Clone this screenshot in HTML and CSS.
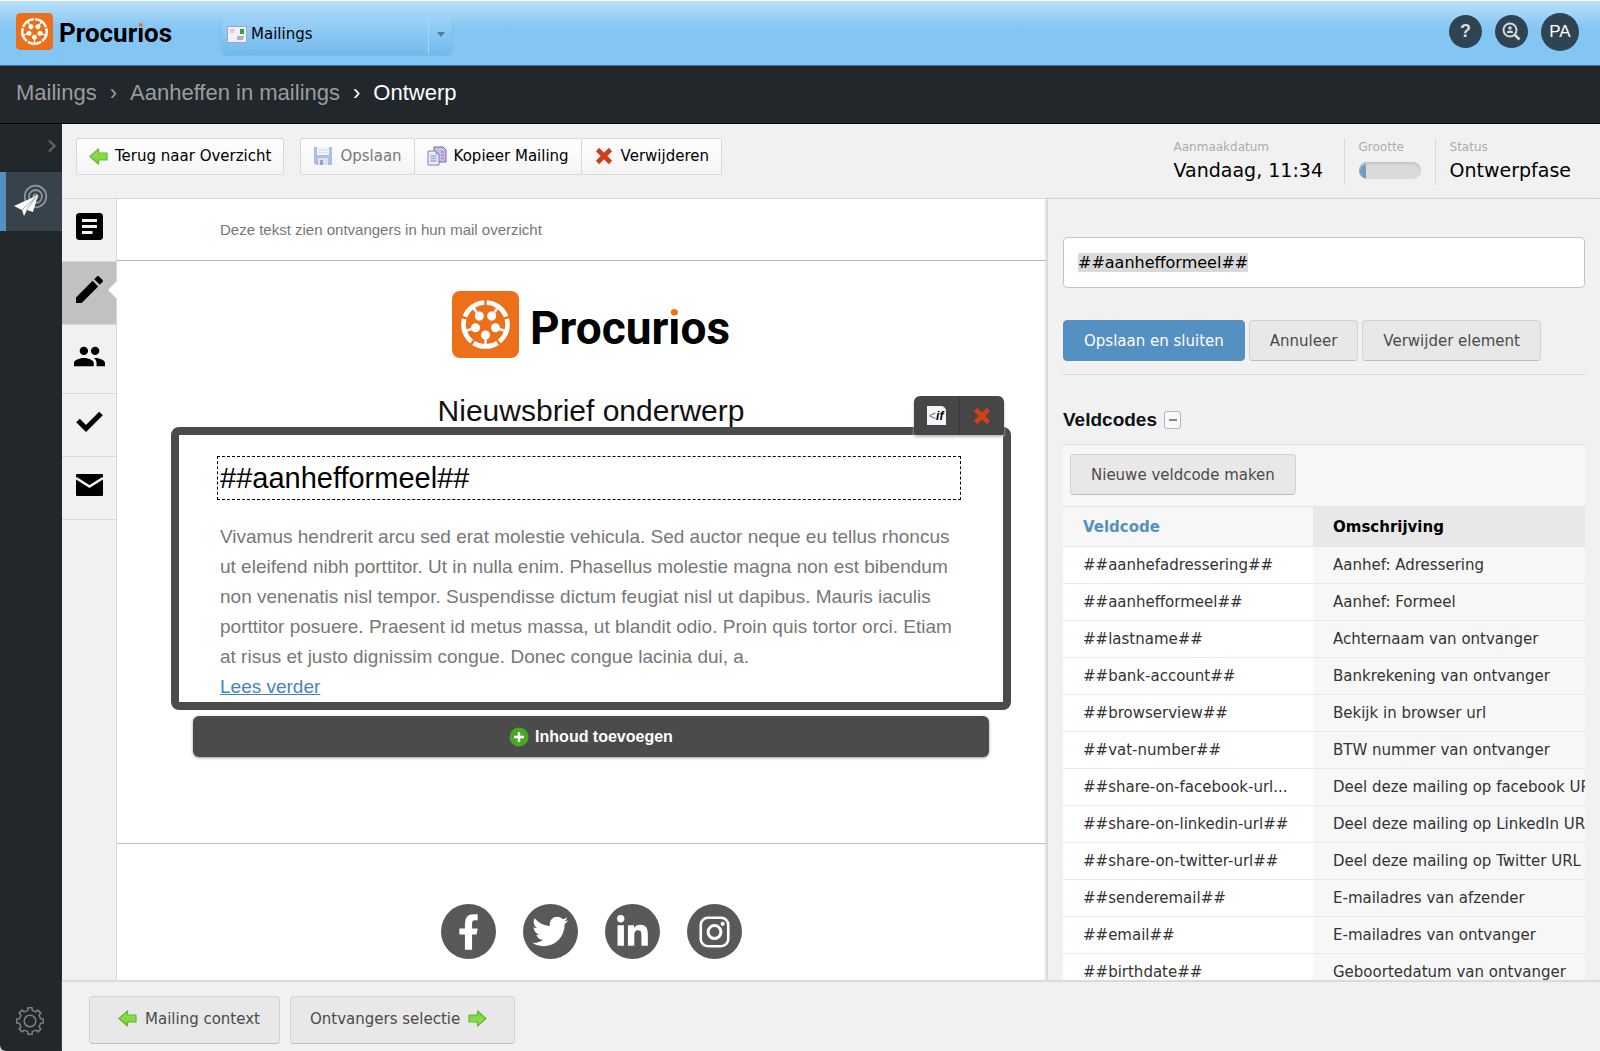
FILE: index.html
```html
<!DOCTYPE html>
<html lang="nl">
<head>
<meta charset="utf-8">
<meta name="viewport" content="width=device-width, initial-scale=1">
<title>Ontwerp - Procurios</title>
<link rel="stylesheet" href="styles.css">
</head>
<body>
<svg class="defs" aria-hidden="true">
  <defs>
    <linearGradient id="green" x1="0" y1="0" x2="0" y2="1"><stop offset="0" stop-color="#9be05a"/><stop offset="1" stop-color="#76d033"/></linearGradient>
    <g id="person"><path d="M-12 18.500A22 22 0 0 0 12 18.500" fill="none" stroke="#fff" stroke-width="4.600"/><path d="M0 11V21" stroke="#fff" stroke-width="2.400"/><circle cy="10.500" r="4.500" fill="#fff"/></g>
    <symbol id="mark" viewBox="0 0 67 67"><rect width="67" height="67" rx="8" fill="#ec7019"/><g transform="translate(33.500 33.500)"><use href="#person"/><use href="#person" transform="rotate(72)"/><use href="#person" transform="rotate(144)"/><use href="#person" transform="rotate(216)"/><use href="#person" transform="rotate(288)"/></g></symbol>
    <symbol id="arrow" viewBox="0 0 19 17"><path d="M1 8.500L9.500 1V5H18V12H9.500V16Z" fill="url(#green)" stroke="#5fb82c" stroke-width="1.200" stroke-linejoin="round"/></symbol>
    <symbol id="cross" viewBox="0 0 18 18"><path d="M2.500 2.500L15.500 15.500M15.500 2.500L2.500 15.500" stroke="#cf3f1a" stroke-width="4.600"/></symbol>
  </defs>
</svg>

<header class="topbar">
  <a class="brand" href="#" aria-label="Procurios"><svg class="brand-mark"><use href="#mark"/></svg><span class="wordmark">Procur<span class="dot-i">i</span>os</span></a>
  <div class="module">
    <svg class="module-icon" viewBox="0 0 20 17" aria-hidden="true"><rect x=".5" y=".5" width="19" height="16" fill="#f1eff9" stroke="#a5a0c8"/><path d="M3 4h5M3 6h4" stroke="#c9a0b8"/><rect x="13" y="3" width="4" height="5" fill="#37a52c"/><path d="M10 11h7M10 13h6" stroke="#9c98b8" stroke-width="1.500"/></svg>
    <select class="module-select" aria-label="Module"><option>Mailings</option></select>
    <span class="module-toggle" aria-hidden="true"></span>
  </div>
  <nav class="user-tools" aria-label="Account">
    <button class="round" aria-label="Help">?</button>
    <button class="round" aria-label="Zoeken"><svg width="19" height="19" viewBox="0 0 19 19"><circle cx="8" cy="8" r="6.500" fill="none" stroke="#d5dbdf" stroke-width="2"/><path d="M13 13L17.500 17.500" stroke="#d5dbdf" stroke-width="2.500"/><circle cx="8" cy="6" r="1.800" fill="#d5dbdf"/><path d="M5 11V9.500Q8 7.500 11 9.500V11Z" fill="#d5dbdf"/></svg></button>
    <button class="round round-user">PA</button>
  </nav>
</header>

<nav class="crumbs" aria-label="Kruimelpad"><a href="#">Mailings</a><span>›</span><a href="#">Aanheffen in mailings</a><span class="now">›</span><span class="now">Ontwerp</span></nav>

<div class="shell">
  <nav class="sidebar" aria-label="Hoofdmenu">
    <button class="expand" aria-label="Uitklappen"><svg width="10" height="14" viewBox="0 0 10 14"><path d="M2 1.500L7.500 7L2 12.500" fill="none" stroke="#5d6468" stroke-width="2.400"/></svg></button>
    <a class="side-active" href="#" aria-label="Mailings"><svg width="34" height="34" viewBox="0 0 34 34"><g fill="none" stroke="#8d969c" stroke-width="1.800"><circle cx="21.500" cy="12.500" r="10.800"/><circle cx="21.500" cy="12.500" r="6.500"/></g><circle cx="21.500" cy="12.500" r="3" fill="#8d969c"/><path d="M0 22L24 11L19 28L13 26L10 32L8 26Z" fill="#fff"/><path d="M8 26L22 13L12 26.500" fill="none" stroke="#8b959c" stroke-width=".8"/></svg></a>
    <a class="settings" href="#" aria-label="Instellingen"><svg width="28" height="28" viewBox="-14 -14 28 28" fill="none" stroke="#7b8082" stroke-width="1.500" stroke-linejoin="round"><path d="M-2.300-10.600L-2.100-13.300H2.100L2.300-10.600L5.900-9.100L7.900-10.900L10.900-7.900L9.100-5.900L10.600-2.300L13.300-2.100V2.100L10.600 2.300L9.100 5.900L10.900 7.900L7.900 10.900L5.900 9.100L2.300 10.600L2.100 13.300H-2.100L-2.300 10.600L-5.900 9.100L-7.900 10.900L-10.900 7.900L-9.100 5.900L-10.600 2.300L-13.300 2.100V-2.100L-10.600-2.300L-9.100-5.900L-10.900-7.900L-7.900-10.900L-5.900-9.100Z"/><circle r="5.800"/></svg></a>
  </nav>

  <main class="workspace">
    <div class="toolbar">
      <button class="tool"><svg class="arrow"><use href="#arrow"/></svg>Terug naar Overzicht</button>
      <div class="tool-group">
        <button class="tool" disabled><svg width="20" height="20" viewBox="0 0 20 20"><path d="M1 1H19V19H3L1 17Z" fill="#a9bfe3"/><path d="M4 1H16V9H4Z" fill="#f4f4f2"/><path d="M5.500 4H14.500M5.500 6.500H14.500" stroke="#d5d8dc"/><path d="M5 12H15V19H5Z" fill="#dfe3e8"/><path d="M7 14H10V19H7Z" fill="#8fa7cf"/></svg>Opslaan</button>
        <button class="tool"><svg width="20" height="20" viewBox="0 0 20 20"><path d="M7 1H16L19 4V16H7Z" fill="#c9bfe6" stroke="#7b64ab"/><path d="M1 5H9L12 8V19H1Z" fill="#e9eefa" stroke="#7686bd"/><path d="M9 5V8H12" fill="none" stroke="#7686bd"/><path d="M3.500 10H9.500M3.500 12.500H9.500M3.500 15H9.500" stroke="#98a8d3" stroke-width="1.300"/><path d="M14 6H17M14 9H17M14 12H17" stroke="#8b78bd"/></svg>Kopieer Mailing</button>
        <button class="tool"><svg width="20" height="18"><use href="#cross"/></svg>Verwijderen</button>
      </div>
      <dl class="facts">
        <div><dt>Aanmaakdatum</dt><dd>Vandaag, 11:34</dd></div>
        <div><dt>Grootte</dt><dd><span class="meter" role="img" aria-label="Grootte van de mailing"></span></dd></div>
        <div><dt>Status</dt><dd>Ontwerpfase</dd></div>
      </dl>
    </div>

    <div class="panes">
      <nav class="rail" aria-label="Stappen">
        <a href="#" aria-label="Context"><svg viewBox="3 3 18 18" width="27" height="27"><path d="M19 3H5c-1.100 0-2 .9-2 2v14c0 1.100.9 2 2 2h14c1.100 0 2-.9 2-2V5c0-1.100-.9-2-2-2zm-5 14H7v-2h7v2zm3-4H7v-2h10v2zm0-4H7V7h10v2z"/></svg></a>
        <a href="#" class="current" aria-label="Ontwerp"><svg viewBox="3 3 18 18" width="27" height="27"><path d="M3 17.250V21h3.750L17.810 9.940l-3.750-3.750L3 17.250zM20.710 7.040c.39-.39.39-1.020 0-1.410l-2.340-2.340c-.39-.39-1.020-.39-1.410 0l-1.830 1.830 3.750 3.750 1.830-1.830z"/></svg></a>
        <a href="#" class="tall" aria-label="Ontvangers"><svg viewBox="1 5 22 14" width="31" height="21"><path d="M16 11c1.660 0 2.990-1.340 2.990-3S17.660 5 16 5c-1.660 0-3 1.340-3 3s1.340 3 3 3zm-8 0c1.660 0 2.990-1.340 2.990-3S9.660 5 8 5C6.340 5 5 6.340 5 8s1.340 3 3 3zm0 2c-2.330 0-7 1.170-7 3.500V19h14v-2.500c0-2.330-4.670-3.500-7-3.500zm8 0c-.29 0-.62.020-.97.050 1.160.84 1.970 1.970 1.970 3.450V19h6v-2.500c0-2.330-4.670-3.500-7-3.500z"/></svg></a>
        <a href="#" aria-label="Controle"><svg viewBox="0 0 27 21" width="27" height="21"><path d="M2 9.500L10 17.500L25 2.500" fill="none" stroke="#000" stroke-width="5"/></svg></a>
        <a href="#" aria-label="Verzenden"><svg viewBox="0 0 27 22" width="27" height="22"><rect width="27" height="22" rx="1"/><path d="M0 4L13.500 12.500L27 4" fill="none" stroke="#f1f1f1" stroke-width="2.600"/></svg></a>
      </nav>

      <section class="preview" aria-label="Voorbeeld">
        <p class="preheader">Deze tekst zien ontvangers in hun mail overzicht</p>
        <div class="mail">
          <div class="mail-logo"><svg class="mail-mark"><use href="#mark"/></svg><span class="wordmark wordmark-big">Procur<span class="dot-i">i</span>os</span></div>
          <h1 class="subject">Nieuwsbrief onderwerp</h1>
          <article class="block">
            <div class="block-tools">
              <button aria-label="Voorwaarde"><span class="if-icon">&lt;<b>if</b></span></button>
              <button aria-label="Blok verwijderen"><svg width="22" height="18"><use href="#cross"/></svg></button>
            </div>
            <h2 class="salutation">##aanhefformeel##</h2>
            <p class="copy">Vivamus hendrerit arcu sed erat molestie vehicula. Sed auctor neque eu tellus rhoncus<br>ut eleifend nibh porttitor. Ut in nulla enim. Phasellus molestie magna non est bibendum<br>non venenatis nisl tempor. Suspendisse dictum feugiat nisl ut dapibus. Mauris iaculis<br>porttitor posuere. Praesent id metus massa, ut blandit odio. Proin quis tortor orci. Etiam<br>at risus et justo dignissim congue. Donec congue lacinia dui, a.<br><a href="#">Lees verder</a></p>
          </article>
          <button class="add"><svg width="20" height="20" viewBox="0 0 20 20"><circle cx="10" cy="10" r="9.500" fill="#48a823"/><path d="M10 5V15M5 10H15" stroke="#fff" stroke-width="2.400"/></svg>Inhoud toevoegen</button>
        </div>
        <div class="social">
          <a href="#" aria-label="Facebook"><svg viewBox="0 0 54 54"><path d="M23.500 45V30H18V24H23.500V19Q23.500 10 32 10H36V16H33Q30.500 16 30.500 19V24H36L35 30H30.500V45Z"/></svg></a>
          <a href="#" aria-label="Twitter"><svg viewBox="-130 -134 780 780"><path d="M459.370 151.716c.325 4.548.325 9.097.325 13.645 0 138.720-105.583 298.558-298.558 298.558-59.452 0-114.680-17.219-161.137-47.106 8.447.974 16.568 1.299 25.340 1.299 49.055 0 94.213-16.568 130.274-44.832-46.132-.975-84.792-31.188-98.112-72.772 6.498.974 12.995 1.624 19.818 1.624 9.421 0 18.843-1.300 27.614-3.573-48.081-9.747-84.143-51.980-84.143-102.985v-1.299c13.969 7.797 30.214 12.670 47.431 13.319-28.264-18.843-46.781-51.005-46.781-87.391 0-19.492 5.197-37.360 14.294-52.954 51.655 63.675 129.300 105.258 216.365 109.807-1.624-7.797-2.599-15.918-2.599-24.040 0-57.828 46.782-104.934 104.934-104.934 30.213 0 57.502 12.670 76.670 33.137 23.715-4.548 46.456-13.320 66.599-25.340-7.798 24.366-24.366 44.833-46.132 57.827 21.117-2.273 41.584-8.122 60.426-16.243-14.292 20.791-32.161 39.308-52.628 54.253z"/></svg></a>
          <a href="#" aria-label="LinkedIn"><svg viewBox="-175 -160 800 800"><path d="M100.280 448H7.400V148.900h92.880zM53.790 108.100C24.090 108.100 0 83.500 0 53.800a53.790 53.790 0 0 1 107.580 0c0 29.700-24.100 54.300-53.790 54.300zM447.900 448h-92.680V302.400c0-34.700-.7-79.200-48.290-79.200-48.290 0-55.690 37.700-55.690 76.700V448h-92.780V148.900h89.080v40.800h1.300c12.400-23.500 42.690-48.300 87.880-48.300 94 0 111.280 61.900 111.280 142.300V448z"/></svg></a>
          <a href="#" aria-label="Instagram"><svg viewBox="0 0 54 54"><rect x="13.500" y="13.500" width="27" height="28" rx="7" fill="none" stroke="#fff" stroke-width="2.600"/><circle cx="27" cy="27.500" r="6.300" fill="none" stroke="#fff" stroke-width="3"/><circle cx="35" cy="19.500" r="2"/></svg></a>
        </div>
      </section>

      <aside class="editor">
        <input class="field" id="tekst" type="text" value="##aanhefformeel##" aria-label="Tekst">
        <div class="actions">
          <button class="btn btn-primary">Opslaan en sluiten</button>
          <button class="btn">Annuleer</button>
          <button class="btn">Verwijder element</button>
        </div>
        <h2 class="editor-title">Veldcodes <button class="collapse" aria-label="Inklappen"></button></h2>
        <div class="new-code"><button class="btn">Nieuwe veldcode maken</button></div>
        <table class="codes">
          <thead><tr><th><a href="#">Veldcode</a></th><th>Omschrijving</th></tr></thead>
          <tbody>
            <tr><td>##aanhefadressering##</td><td>Aanhef: Adressering</td></tr>
            <tr><td>##aanhefformeel##</td><td>Aanhef: Formeel</td></tr>
            <tr><td>##lastname##</td><td>Achternaam van ontvanger</td></tr>
            <tr><td>##bank-account##</td><td>Bankrekening van ontvanger</td></tr>
            <tr><td>##browserview##</td><td>Bekijk in browser url</td></tr>
            <tr><td>##vat-number##</td><td>BTW nummer van ontvanger</td></tr>
            <tr><td>##share-on-facebook-url...</td><td>Deel deze mailing op facebook URL</td></tr>
            <tr><td>##share-on-linkedin-url##</td><td>Deel deze mailing op LinkedIn URL</td></tr>
            <tr><td>##share-on-twitter-url##</td><td>Deel deze mailing op Twitter URL</td></tr>
            <tr><td>##senderemail##</td><td>E-mailadres van afzender</td></tr>
            <tr><td>##email##</td><td>E-mailadres van ontvanger</td></tr>
            <tr><td>##birthdate##</td><td>Geboortedatum van ontvanger</td></tr>
          </tbody>
        </table>
      </aside>
    </div>

    <footer class="steps">
      <button class="btn step"><svg class="arrow"><use href="#arrow"/></svg>Mailing context</button>
      <button class="btn step">Ontvangers selectie<svg class="arrow arrow-next"><use href="#arrow"/></svg></button>
    </footer>
  </main>
</div>
<script src="app.js"></script>
</body>
</html>
```
FILE: styles.css
```css
:root {
  --ui: "DejaVu Sans", Verdana, sans-serif;
  --text: "Liberation Sans", Arial, sans-serif;
  --blue: #5490c1;
  --dark: #22272b;
  --frame: #4b4b4b;
  --pane: #f1f1f1;
  --line: #d8d8d8;
}

* { box-sizing: border-box; }

body {
  margin: 0;
  height: 100vh;
  display: flex;
  flex-direction: column;
  overflow: hidden;
  background: #d5d5d5;
  font-family: var(--ui);
  font-size: 15px;
  color: #000;
}

button, select, input { font: inherit; color: inherit; margin: 0; }
button { cursor: pointer; }
p, h1, h2, dl, dd { margin: 0; }
svg { flex: none; }
.defs { position: absolute; width: 0; height: 0; }

/* Top bar */
.topbar {
  flex: none;
  height: 66px;
  display: flex;
  align-items: center;
  padding: 0 21px 3px 16px;
  border-top: 1px solid #fff;
  border-bottom: 1px solid #3a7096;
  background: linear-gradient(#b9e0fa, #83c5f3 28px);
}
.brand { display: flex; align-items: center; gap: 6px; width: 205px; text-decoration: none; color: #000; }
.brand-mark { width: 37px; height: 37px; }
.wordmark { padding-top: 2px; font-family: Roboto, sans-serif; font-weight: 700; font-size: 26px; line-height: 1; }
.dot-i {
  background: linear-gradient(#ec7019 34%, #000 34%);
  background-clip: text;
  -webkit-background-clip: text;
  color: transparent;
}
.module {
  display: flex;
  align-items: center;
  width: 231px;
  height: 39px;
  margin-top: 6px;
  border-radius: 6px;
  background: linear-gradient(#9fd3f7, #72baee);
  box-shadow: 0 1px 2px #6aaee0;
}
.module-icon { width: 20px; height: 17px; margin-left: 6px; }
.module-select { flex: 1; height: 39px; padding: 0 4px 1px; border: 0; background: none; appearance: none; }
.module-toggle {
  width: 24px;
  height: 39px;
  display: grid;
  place-items: center;
  border-left: 1px solid #a5d5f7;
}
.module-toggle::before { content: ""; border: 4px solid transparent; border-top: 5px solid #4b7ba0; border-bottom: 0; }
.user-tools { display: flex; align-items: center; gap: 13px; margin-left: auto; }
.round {
  width: 33px;
  height: 33px;
  display: grid;
  place-items: center;
  padding: 0;
  border: 0;
  border-radius: 50%;
  background: #2f4453;
  color: #d5dbdf;
  font: 700 18px var(--text);
}
.round-user { width: 38px; height: 38px; color: #fff; font-size: 17px; font-weight: 400; }

.crumbs {
  flex: none;
  height: 58px;
  display: flex;
  align-items: center;
  gap: 13px;
  padding: 0 16px 4px;
  background: var(--dark);
  border-bottom: 1px solid #000;
  font: 22px var(--text);
  color: #9a9d9f;
}
.crumbs a { color: inherit; text-decoration: none; }
.crumbs .now { color: #fff; }

/* Shell */
.shell { flex: 1; min-height: 0; display: flex; }
.sidebar {
  flex: none;
  width: 62px;
  display: flex;
  flex-direction: column;
  background: var(--dark);
  border-bottom-left-radius: 6px;
}
.expand { height: 48px; display: flex; align-items: center; justify-content: flex-end; padding: 0 5px 4px; border: 0; background: none; }
.side-active {
  height: 59px;
  display: grid;
  place-items: center;
  padding: 0 6px 2px 0;
  border-left: 6px solid var(--blue);
  background: #37424a;
}
.settings { margin-top: auto; padding: 0 16px 12px; }
.workspace { flex: 1; min-width: 0; display: flex; flex-direction: column; background: var(--pane); }

/* Toolbar */
.toolbar {
  flex: none;
  height: 75px;
  display: flex;
  align-items: flex-start;
  gap: 16px;
  padding: 14px 29px 0 14px;
  border-bottom: 1px solid var(--line);
}
.tool-group { display: flex; }
.tool {
  height: 37px;
  display: flex;
  align-items: center;
  gap: 7px;
  padding: 0 12px 1px;
  border: 1px solid var(--line);
  border-radius: 2px;
  background: linear-gradient(#fff, #f4f4f4);
  white-space: nowrap;
}
.tool + .tool { border-left: 0; }
.tool:disabled { color: #777; }
.arrow { width: 19px; height: 17px; }
.arrow-next { transform: rotate(180deg); }
.facts { display: flex; margin-left: auto; }
.facts div { height: 47px; padding: 2px 14px 0; border-left: 1px solid var(--line); white-space: nowrap; }
.facts div:first-child { min-width: 184px; border: 0; }
.facts div:last-child { padding-right: 0; }
.facts dt { font-size: 12px; line-height: 14px; color: #adadad; }
.facts dd { font-size: 19px; line-height: 24px; margin-top: 4px; }
.meter {
  display: block;
  width: 62px;
  height: 17px;
  margin-top: 8px;
  border-radius: 9px;
  background: linear-gradient(90deg, #719cc2 7px, #dadada 7px);
  box-shadow: inset 0 2px 2px #c4c4c4;
}

/* Panes */
.panes { flex: 1; min-height: 0; display: grid; grid-template-columns: 55px minmax(0, 1fr) 553px; }
.rail { border-right: 1px solid var(--line); }
.rail a {
  position: relative;
  height: 63px;
  display: grid;
  place-items: center;
  padding-bottom: 7px;
  border-bottom: 1px solid var(--line);
}
.rail .tall { height: 69px; padding-bottom: 6px; }
.rail .current { background: #c1c1c1; }
.rail .current::after {
  content: "";
  position: absolute;
  right: -1px;
  top: 19px;
  border: 9px solid transparent;
  border-left: 0;
  border-right-color: #fff;
}

.preview { overflow: hidden; background: #fff; font-family: var(--text); }
.preheader { height: 62px; padding: 0 103px; border-bottom: 1px solid #b5b5b5; font-size: 15px; line-height: 62px; color: #777; }
.mail { height: 583px; padding: 30px 36px 0 54px; border-bottom: 1px solid #c2c2c2; }
.mail-logo { display: flex; align-items: center; justify-content: center; gap: 11px; }
.mail-mark { width: 67px; height: 67px; }
.wordmark-big { padding-top: 6px; font-size: 46px; }
.subject { margin-top: 36px; font-size: 30px; font-weight: 400; line-height: 34px; text-align: center; color: #111; }
.block {
  position: relative;
  max-width: 840px;
  margin: -1px auto 0;
  padding: 21px 42px 0 38px;
  border: 8px solid var(--frame);
  border-radius: 8px;
}
.block-tools {
  position: absolute;
  right: -1px;
  top: -39px;
  display: flex;
  width: 90px;
  height: 39px;
  border-radius: 6px 6px 2px 2px;
  background: #464646;
  box-shadow: 0 2px 3px #bbb;
}
.block-tools button { flex: 1; display: grid; place-items: center; padding: 0; border: 0; background: none; }
.block-tools button + button { border-left: 1px solid #383838; }
.if-icon { width: 19px; height: 19px; border-top-right-radius: 5px; background: #f3f6fb; font: 12px/20px var(--text); color: #777; white-space: nowrap; }
.if-icon b { color: #000; font-style: italic; }
.salutation { height: 44px; padding: 0 2px; border: 1px dashed #000; font-size: 29px; font-weight: 400; line-height: 42px; }
.copy { padding: 22px 3px 0; font-size: 19px; line-height: 30px; color: #777; white-space: nowrap; }
.copy a { color: #4486bb; }
.add {
  width: calc(100% - 44px);
  max-width: 796px;
  height: 41px;
  display: flex;
  align-items: center;
  justify-content: center;
  gap: 6px;
  margin: 6px auto 0;
  padding: 0;
  border: 0;
  border-radius: 6px;
  background: var(--frame);
  box-shadow: 0 1px 3px #999;
  color: #fff;
  font-size: 16px;
  font-weight: 700;
  font-family: var(--text);
}
.social { display: flex; justify-content: center; gap: 27px; padding: 60px 0 0 18px; }
.social a { width: 55px; height: 55px; border-radius: 50%; background: #595959; }
.social svg { display: block; width: 55px; height: 55px; fill: #fff; }

/* Editor */
.editor { z-index: 1; overflow: hidden; padding: 38px 15px 0 15px; border-left: 1px solid var(--line); background: var(--pane); box-shadow: -1px 0 3px #ccc; }
.field {
  display: block;
  width: 100%;
  height: 51px;
  padding: 0 14px;
  border: 1px solid #c4c4c4;
  border-radius: 4px;
  outline: 0;
  background: #fff;
  font-size: 16px;
}
.field::selection { background: #d9d9d9; color: #000; }
.actions { display: flex; gap: 4px; padding: 32px 0 13px; border-bottom: 1px solid var(--line); }
.btn {
  height: 41px;
  display: flex;
  align-items: center;
  justify-content: center;
  padding: 0 20px;
  border: 1px solid #d3d3d3;
  border-bottom-color: #bebebe;
  border-radius: 4px;
  background: #e8e8e8;
  color: #4b4b4b;
  white-space: nowrap;
}
.btn-primary { border-color: var(--blue); background: var(--blue); color: #fff; }
.editor-title { display: flex; align-items: center; gap: 7px; height: 69px; padding-top: 20px; font: 700 19px var(--text); color: #0d1117; }
.collapse { width: 17px; height: 18px; display: grid; place-items: center; padding: 0; border: 1px solid #b5b5b5; border-radius: 3px; background: #fafafa; }
.collapse::before { content: ""; width: 8px; height: 2px; background: #888; }
.new-code { height: 63px; padding: 9px 7px; border-top: 1px solid #dedede; border-bottom: 1px solid #e4e4e4; background: #f7f7f7; }
.codes { width: 100%; table-layout: fixed; border-collapse: separate; border-spacing: 0; }
.codes th, .codes td { height: 37px; padding: 0 0 0 20px; overflow: hidden; border-bottom: 1px solid #e9e9e9; text-align: left; white-space: nowrap; }
.codes th { height: 40px; background: #e8e8e8; }
.codes th:first-child { width: 250px; background: #f7f7f7; }
.codes th a { color: var(--blue); text-decoration: none; }
.codes td { background: #f7f7f7; color: #333; }
.codes td:first-child { background: #fff; }

.steps { flex: none; height: 70px; display: flex; gap: 10px; padding: 14px 27px 0; border-top: 1px solid var(--line); box-shadow: 0 -1px 1px #ddd; z-index: 2; background: var(--pane); }
.step { height: 48px; gap: 8px; padding: 0 19px 3px 28px; }
.step:last-child { padding: 0 27px 3px 19px; }
```
FILE: app.js
```js
const field = document.getElementById("tekst");
field.focus();
field.select();
```
